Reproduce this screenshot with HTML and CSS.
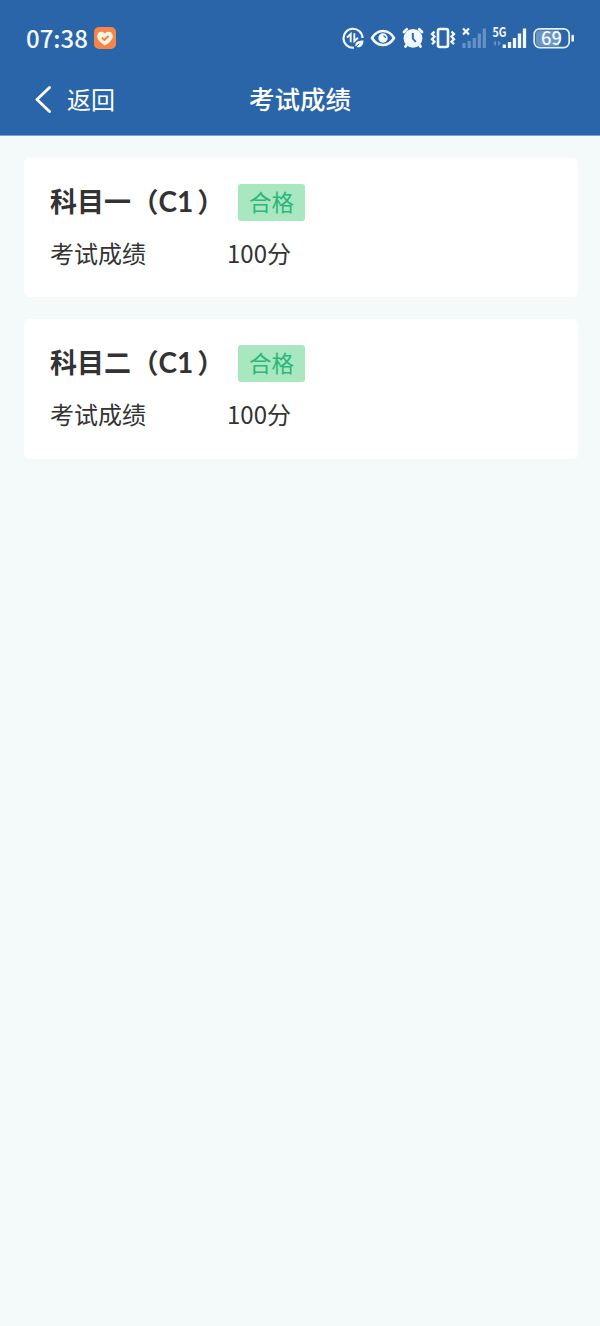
FILE: index.html
```html
<!DOCTYPE html>
<html lang="zh-CN">
<head>
<meta charset="utf-8">
<title>考试成绩</title>
<link rel="stylesheet" href="styles.css">
</head>
<body>
<header class="header">
  <div class="status">
    <span class="clock">07:38</span>
    <svg class="health" width="22" height="22" viewBox="0 0 22 22"><rect width="22" height="22" rx="5" fill="#f5864a"/><path d="M11 18.600C7 15.900 3.200 13 3.200 9c0-4.500 5.500-5.800 7.800-2.400C13.300 3.200 18.800 4.500 18.800 9c0 4-3.800 6.900-7.800 9.600z" fill="#fff3e3"/><path d="M7.800 10.600l2.500 2.400 4.300-4" fill="none" stroke="#f07c40" stroke-width="1.800"/></svg>
    <div class="icons">
      <svg class="data" width="22" height="22" viewBox="0 0 22 22" fill="none" stroke="#f2f8ff" stroke-width="2.200"><path d="M12 20.700A9.500 9.500 0 1 1 20.500 11"/><path d="M5 10.500L8.700 7V15.200M12.300 6.300V14.200L16 10.800" stroke-width="1.900"/><path d="M13.500 19.500c-1-4 2-6 8-6 0 5.500-3.500 8-7 6.300z" fill="#f2f8ff" stroke="none"/><path d="M12.500 21l4.800-4.200" stroke="#2b65a9" stroke-width="1"/></svg>
      <svg class="eye" width="26" height="20" viewBox="0 0 26 20"><path d="M2 10C7.500 0.700 18.500 0.700 24 10 18.500 19.300 7.500 19.300 2 10z" fill="none" stroke="#f2f8ff" stroke-width="2.600"/><circle cx="13" cy="10" r="4.700" fill="#f2f8ff"/><path d="M13.300 7.700a2.200 2.200 0 0 1 2.200 2.200" fill="none" stroke="#2b65a9" stroke-width="1.100"/></svg>
      <svg class="alarm" width="22" height="22" viewBox="0 0 22 22"><path d="M2 5L4.800 2.300M17.200 2.300L20 5M4.500 18l-1 1.500M17.500 18l1 1.500" fill="none" stroke="#f2f8ff" stroke-width="2.800" stroke-linecap="round"/><circle cx="11" cy="11.300" r="9.400" fill="#f2f8ff"/><path d="M10.800 6v5.500l3 3.500" fill="none" stroke="#2b65a9" stroke-width="1.900"/></svg>
      <svg class="vibrate" width="26" height="22" viewBox="0 0 26 22" fill="none" stroke="#f2f8ff"><rect x="8" y="2" width="10" height="18" rx="2" stroke-width="2.600"/><path d="M4.500 4.500L2 7.100 4.500 9.600 2 12.200l2.500 2.500L2 17.300M21.500 4.500L24 7.100 21.500 9.600 24 12.200l-2.500 2.500 2.500 2.600" stroke-width="2.300"/></svg>
      <svg class="nosim" width="24" height="22" viewBox="0 0 24 22"><path d="M1 1.500l6 6m0-6l-6 6" stroke="#f2f8ff" stroke-width="2.200"/><path d="M2 21v-5M7.200 21v-7M12.300 21V11M17.300 21V6.500M22.300 21V1.500" stroke="#6792c6" stroke-width="3.200"/></svg>
      <svg class="signal" width="35" height="24" viewBox="0 0 35 24"><text class="net" x="0.500" y="11" textLength="14" lengthAdjust="spacingAndGlyphs">5G</text><path d="M4 14.500L1.200 17.200 4 20zM6 14.500l2.800 2.700L6 20z" fill="#6792c6"/><path d="M12.300 22v-3.500M17.500 22v-6M22.500 22V12M27.500 22V7.500M32.500 22V2.500" stroke="#f2f8ff" stroke-width="3.300"/></svg>
      <svg class="battery" width="42" height="22" viewBox="0 0 42 22"><rect x="1.200" y="1.800" width="35" height="18.800" rx="5.500" fill="#2b65a9" stroke="#e5effa" stroke-width="1.700"/><path d="M7 3.500H26v15.500H7a4 4 0 0 1-4-4V7.500a4 4 0 0 1 4-4z" fill="#6b94c6"/><path d="M39.700 9v4.500" stroke="#f2f8ff" stroke-width="2.600" stroke-linecap="round"/><text class="level" x="8" y="17.800" textLength="21" lengthAdjust="spacingAndGlyphs">69</text></svg>
    </div>
  </div>
  <nav class="nav">
    <a class="back"><svg width="18" height="28" viewBox="0 0 18 28"><path d="M15.500 2.500L3 14.500l12.500 12" fill="none" stroke="#fff" stroke-width="2.800" stroke-linecap="round" stroke-linejoin="round"/></svg><span>返回</span></a>
    <h1 class="title">考试成绩</h1>
  </nav>
</header>
<main class="list">
  <section class="card">
    <div class="subject"><h2 class="name">科目一<span class="open">（</span><span class="grade">C1</span><span class="close">）</span></h2><span class="badge">合格</span></div>
    <div class="row"><span class="label">考试成绩</span><span class="score">100分</span></div>
  </section>
  <section class="card">
    <div class="subject"><h2 class="name">科目二<span class="open">（</span><span class="grade">C1</span><span class="close">）</span></h2><span class="badge">合格</span></div>
    <div class="row"><span class="label">考试成绩</span><span class="score">100分</span></div>
  </section>
</main>
</body>
</html>
```

FILE: styles.css
```css
* { box-sizing: border-box; }
body {
  margin: 0;
  min-height: 1326px;
  background: #f4f9fa;
  color: #333;
  font-family: "Noto Sans CJK SC", sans-serif;
}
.header {
  height: 136px;
  background: #2b65a9;
  border-bottom: 1px solid #78a5d5;
  color: #fff;
}
.status {
  display: flex;
  align-items: center;
  height: 76px;
  padding: 0 25px 0 26px;
}
.clock {
  width: 62px;
  font-size: 24px;
  font-weight: 500;
  line-height: 30px;
  color: #f2f8ff;
  white-space: nowrap;
}
.health { margin-left: 6px; }
.icons {
  display: flex;
  align-items: center;
  gap: 6px;
  margin-left: auto;
}
.signal, .battery { overflow: visible; }
.net { font: 700 13px "Noto Sans CJK SC", sans-serif; fill: #f2f8ff; }
.level { font: 500 18.500px "Noto Sans CJK SC", sans-serif; fill: #f2f8ff; }
.nav {
  display: grid;
  grid-template-columns: 215px 1fr 215px;
  align-items: center;
  height: 46px;
}
.back {
  display: flex;
  align-items: center;
  gap: 15px;
  padding-left: 34px;
  font-size: 24px;
  line-height: 36px;
}
.back span { padding-bottom: 1px; }
.title {
  margin: 0;
  padding-bottom: 2px;
  text-align: center;
  font-size: 25.500px;
  font-weight: 500;
  line-height: 38px;
}
.list {
  display: flex;
  flex-direction: column;
  gap: 22px;
  padding: 22px 22px 0 24px;
}
.card {
  height: 139.300px;
  padding: 26px;
  background: #fff;
  border-radius: 5px;
}
.subject {
  display: flex;
  align-items: flex-start;
  height: 37px;
}
.name {
  width: 188px;
  margin: 0;
  font-size: 27px;
  font-weight: 700;
  line-height: 34px;
  white-space: nowrap;
}
.open, .close { font-feature-settings: "halt"; }
.open { margin-left: 14px; }
.grade {
  font-family: Lato, sans-serif;
  font-size: 28px;
  line-height: 1;
}
.close { margin-left: 4px; }
.badge {
  width: 67px;
  height: 37px;
  border-radius: 3px;
  background: #a9e7c0;
  color: #2ab77c;
  font-size: 22.500px;
  line-height: 34px;
  text-align: center;
}
.row {
  display: flex;
  margin-top: 14px;
  font-size: 24px;
  line-height: 36px;
}
.label { width: 177px; }
```
